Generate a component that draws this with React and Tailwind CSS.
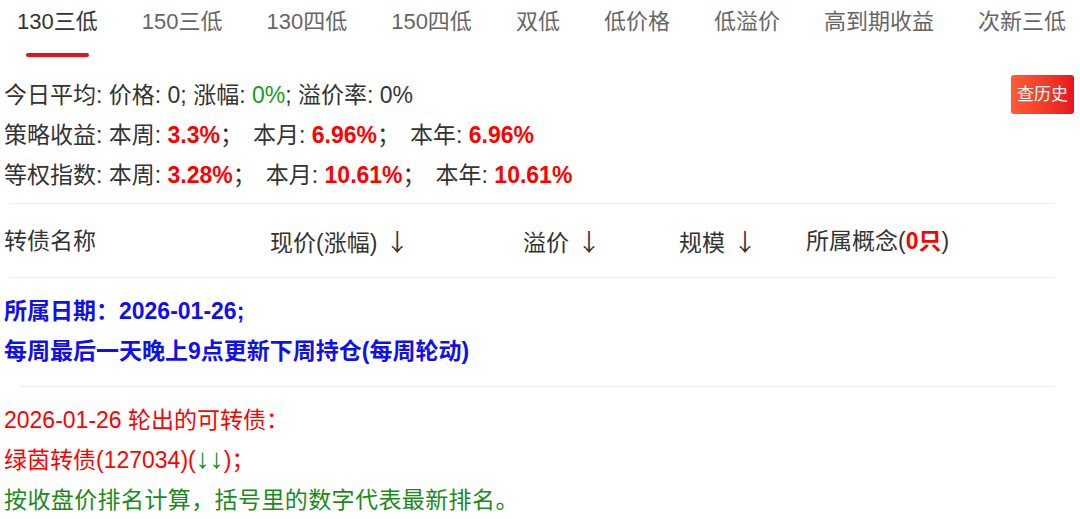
import React from 'react';

const tabs = ['130三低', '150三低', '130四低', '150四低', '双低', '低价格', '低溢价', '高到期收益', '次新三低'];

const font = { fontFamily: '"Liberation Sans", "Noto Sans CJK SC", sans-serif' };

const Red = ({ children }) => <span className="font-bold text-[#ff0000]">{children}</span>;

const Sep = () => <span>；<span className="inline-block w-[10px]"></span></span>;

const Arrow = () => <span className="ml-[8px] font-['Noto_Sans_CJK_SC'] text-[24px]">↓</span>;

const App = () => {
  return (
    <div className="w-[1080px] h-[519px] overflow-hidden bg-white text-[#333]" style={font}>
      {/* tab bar */}
      <div className="flex gap-[44px] pl-[17px] whitespace-nowrap">
        {tabs.map((t, i) => (
          <div key={t} className="flex flex-col items-center">
            <div className={`h-[42px] leading-[43px] text-[22px] ${i === 0 ? 'text-[#333]' : 'text-[#666]'}`}>{t}</div>
            {i === 0 && <div className="mt-[11px] h-[4px] w-[63px] rounded-full bg-[#e8101f]"></div>}
          </div>
        ))}
      </div>

      {/* summary */}
      <div className="flex justify-between mt-[18px] pl-[4px] pr-[6px] text-[23px] leading-[40px] whitespace-nowrap">
        <div>
          <div>今日平均: 价格: 0; 涨幅: <span className="text-[#1a9a1a]">0%</span>; 溢价率: 0%</div>
          <div>策略收益: 本周: <Red>3.3%</Red><Sep />本月: <Red>6.96%</Red><Sep />本年: <Red>6.96%</Red></div>
          <div>等权指数: 本周: <Red>3.28%</Red><Sep />本月: <Red>10.61%</Red><Sep />本年: <Red>10.61%</Red></div>
        </div>
        <button className="h-[39px] w-[63px] rounded-[3px] bg-gradient-to-r from-[#ff5a36] to-[#e8101f] text-white text-[17px] leading-[39px]">查历史</button>
      </div>

      <div className="mt-[8px] ml-[10px] w-[1045px] h-px bg-[#eeeeee]"></div>

      {/* table header */}
      <div className="grid grid-cols-[266px_253px_156px_127px_1fr] items-center h-[73px] pl-[4px] pt-[2px] text-[23px] whitespace-nowrap">
        <div>转债名称</div>
        <div>现价(涨幅)<Arrow /></div>
        <div>溢价<Arrow /></div>
        <div>规模<Arrow /></div>
        <div>所属概念(<span className="font-bold text-[#ff0000]">0只</span>)</div>
      </div>

      <div className="ml-[10px] w-[1045px] h-px bg-[#eeeeee]"></div>

      {/* notes */}
      <div className="mt-[13px] pl-[4px] text-[23px] leading-[40px] font-bold text-[#1010ee] whitespace-nowrap">
        <div>所属日期：2026-01-26;</div>
        <div>每周最后一天晚上9点更新下周持仓(每周轮动)</div>
      </div>

      <div className="mt-[15px] ml-[20px] w-[1035px] h-px bg-[#eeeeee]"></div>

      <div className="mt-[13px] pl-[4px] text-[23px] leading-[40px] whitespace-nowrap">
        <div className="text-[#ff0000]">2026-01-26 轮出的可转债：</div>
        <div className="text-[#ff0000]">绿茵转债(127034)(<span className="text-[28px] leading-[0] text-[#1a8a1a]">↓↓</span>)；</div>
        <div className="text-[#1a8a1a] tracking-[0.4px]">按收盘价排名计算，括号里的数字代表最新排名。</div>
      </div>
    </div>
  );
};

export default App;
